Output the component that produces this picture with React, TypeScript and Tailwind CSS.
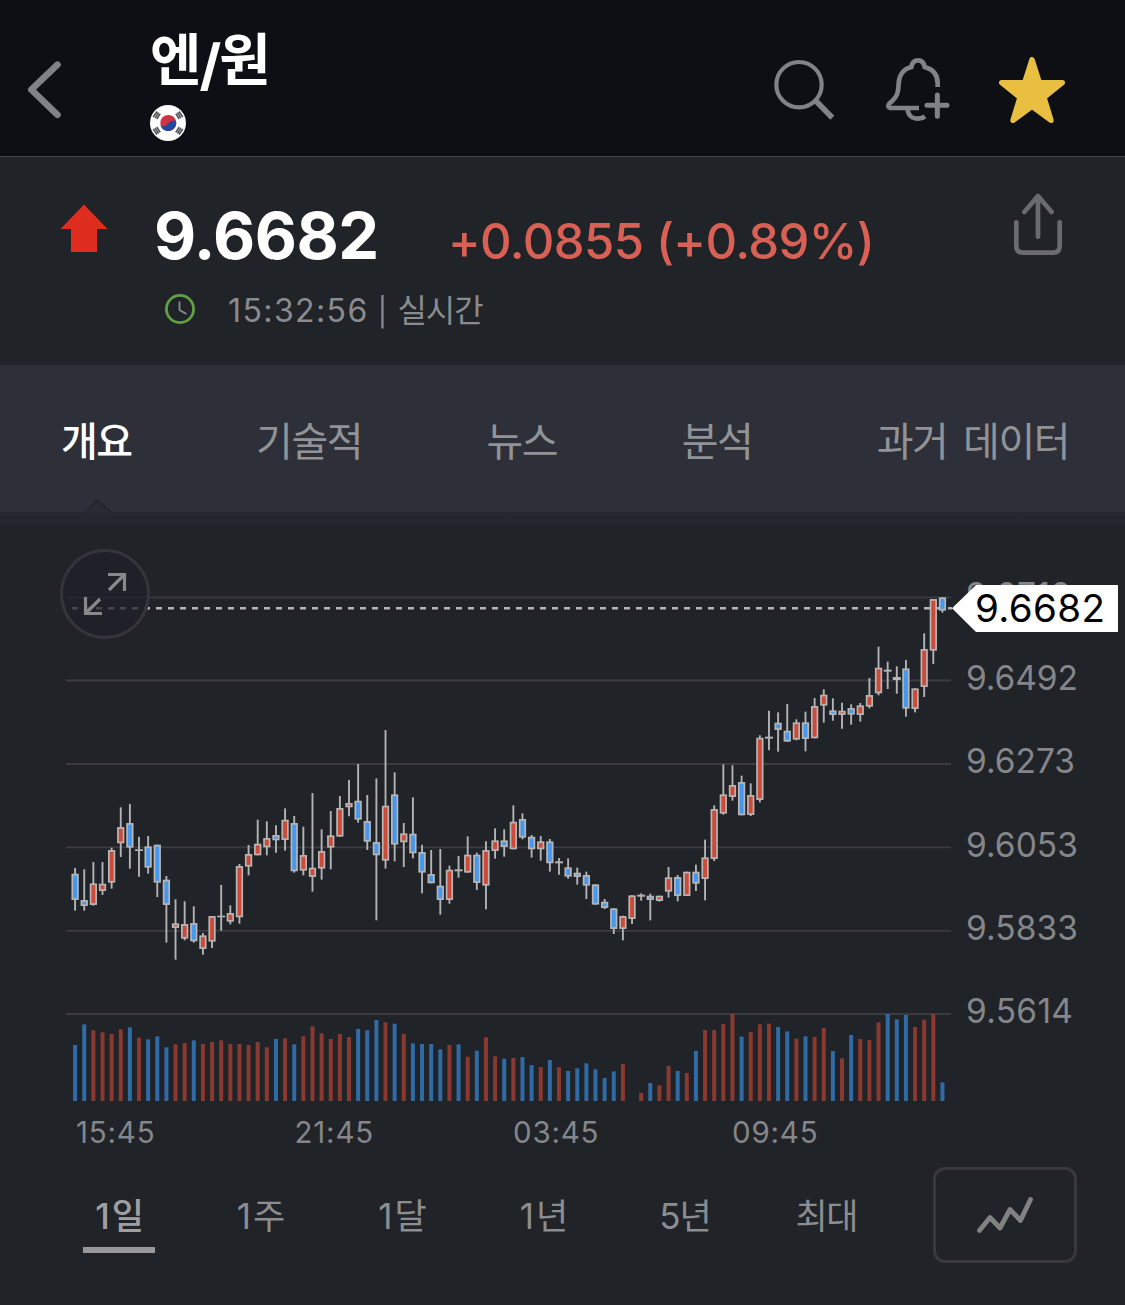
import React from "react";

const FONT = "font-['Inter','Noto_Sans_CJK_KR',sans-serif]";

type Kind = "r" | "b" | "d";
type Candle = [Kind, number, number, number, number];

// [kind, high, body top, body bottom, low] in thirds of a pixel, grouped by vertical origin
const EARLY: Candle[] = [
  ["b", 444, 461, 540, 572], ["b", 448, 540, 558, 572], ["r", 426, 490, 555, 557], ["r", 426, 491, 513, 525],
  ["r", 383, 390, 488, 506], ["r", 262, 321, 370, 411], ["b", 252, 309, 383, 446], ["d", 350, 388, 393, 470],
  ["b", 348, 379, 443, 461], ["b", 374, 374, 488, 531], ["b", 468, 479, 555, 668], ["r", 538, 610, 624, 719],
  ["r", 544, 612, 656, 661], ["b", 559, 609, 664, 668], ["r", 639, 646, 687, 704], ["r", 588, 588, 665, 684],
  ["d", 495, 587, 592, 632], ["r", 556, 579, 605, 613], ["r", 432, 438, 592, 611], ["r", 375, 402, 440, 466],
  ["r", 299, 371, 406, 406], ["r", 304, 354, 382, 406], ["b", 316, 345, 361, 398], ["r", 265, 299, 360, 392],
  ["b", 288, 309, 454, 458], ["r", 320, 405, 452, 466], ["r", 219, 443, 471, 515], ["r", 328, 393, 446, 479],
  ["r", 273, 346, 383, 448], ["r", 228, 264, 350, 350], ["r", 180, 249, 262, 289], ["b", 132, 242, 299, 308],
  ["b", 225, 303, 365, 390], ["b", 175, 366, 406, 601], ["r", 30, 257, 422, 446], ["b", 157, 223, 374, 424],
  ["r", 309, 340, 367, 441], ["b", 232, 341, 400, 415], ["b", 374, 396, 458, 520], ["b", 390, 462, 490, 490],
  ["b", 387, 497, 540, 584], ["r", 437, 449, 540, 551], ["d", 408, 448, 454, 473], ["r", 349, 404, 458, 458],
  ["b", 398, 404, 489, 510], ["r", 364, 390, 497, 568], ["r", 325, 361, 393, 416], ["b", 328, 361, 381, 410],
  ["r", 256, 305, 388, 388], ["b", 280, 297, 353, 358], ["b", 345, 350, 388, 413], ["r", 348, 364, 388, 422],
  ["b", 357, 364, 430, 455], ["d", 414, 424, 430, 464], ["b", 415, 442, 470, 476], ["b", 443, 458, 471, 494],
  ["b", 455, 465, 497, 537], ["b", 493, 493, 554, 554], ["b", 537, 545, 564, 567], ["b", 565, 565, 627, 642],
  ["r", 587, 588, 627, 661], ["r", 526, 526, 597, 612], ["d", 520, 524, 530, 542], ["b", 521, 527, 540, 601],
  ["r", 527, 527, 543, 545], ["r", 441, 472, 515, 533], ["b", 465, 471, 528, 544], ["r", 455, 455, 528, 528],
  ["b", 434, 455, 491, 513], ["r", 359, 412, 477, 541], ["r", 256, 267, 417, 423], ["r", 133, 223, 281, 284],
  ["r", 136, 195, 231, 242],
];
const LATE: Candle[] = [
  ["b", 617, 636, 736, 736], ["r", 640, 675, 735, 738], ["r", 496, 503, 690, 697], ["d", 422, 500, 506, 541],
  ["b", 427, 458, 480, 545], ["b", 402, 482, 515, 515], ["r", 448, 457, 509, 511], ["b", 425, 457, 507, 544],
  ["r", 384, 408, 505, 505], ["r", 358, 374, 407, 458], ["b", 385, 421, 435, 452], ["r", 398, 422, 435, 476],
  ["b", 403, 414, 434, 464], ["r", 399, 406, 435, 455], ["r", 324, 375, 410, 415], ["r", 230, 293, 370, 376],
  ["d", 275, 299, 305, 357], ["d", 289, 321, 330, 371], ["b", 270, 295, 416, 440], ["r", 355, 355, 417, 427],
  ["r", 190, 237, 351, 381], ["r", 87, 87, 242, 282], ["b", 82, 82, 122, 128],
];

const scale = (origin: number) => (c: Candle): Candle => [
  c[0], origin + c[1] / 3, origin + c[2] / 3, origin + c[3] / 3, origin + c[4] / 3,
];
const CANDLES: Candle[] = [...EARLY.map(scale(720)), ...LATE.map(scale(570))];

const VOLUMES =
  "b135 b73 r91 r97 r102 r88 b82 r113 b118 b109 b142 r133 r129 b121 r132 r126 r121 r132 r132 r135 r126 r142 b117 r115 b133 r109 r79 r100 r117 r102 r111 b87 b91 b60 r67 b71 r102 b130 b132 b132 b148 r135 b133 r170 b152 r112 r169 b176 r174 b171 b195 r201 b180 r202 b213 b205 b190 b208 b234 b214 r192 r303 r279 b249 r256 r198 b213 r219 b153 r90 r90 r72 r42 b110 r96 r73 r71 b81 b94 r116 b109 r111 r84 b153 r175 b105 r117 r120 r67 b42 b58 b45 r81 r59 r42 b247"
    .split(" ")
    .map((v) => ({ up: v[0] === "r", top: 1000 + Number(v.slice(1)) / 3 }));

const xAt = (i: number) => 75.1 + i * 9.13;

const GRID = [597.3, 680.5, 764, 847.3, 930.8, 1014];
const PRICES: [string, number][] = [
  ["9.6712", 105], ["9.6492", 112], ["9.6273", 109], ["9.6053", 112], ["9.5833", 112], ["9.5614", 107],
];
const TIMES: [string, number][] = [["15:45", 76], ["21:45", 294.5], ["03:45", 513], ["09:45", 732]];

function Header() {
  return (
    <header className="flex h-[157px] items-start border-b border-[#46464a] bg-[#0e0f14]">
      <svg className="ml-[24px] mt-[58px] h-[64px] w-[42px] shrink-0" viewBox="24 58 42 64" fill="none">
        <path d="M57.5 64.7 31.3 89.7 57.5 114.8" stroke="#808287" strokeWidth="6.6" strokeLinecap="round" strokeLinejoin="round" />
      </svg>
      <div className="ml-[84px] flex-1">
        <h1 className="mt-[27px] h-[71px] whitespace-nowrap text-[56px] font-bold leading-[66px] tracking-[-2px] text-white">
          엔<span className="align-[-5px] leading-none">/</span>원
        </h1>
        <svg className="mt-[7px] size-9" viewBox="0 0 36 36">
          <circle cx="18" cy="18" r="18" fill="#fff" />
          <circle cx="18.3" cy="18" r="8" fill="#cb3445" />
          <path d="M10.5 20.2C12.6 22.3 15.8 21.5 18.3 18.4 20.5 15.4 24 14.8 26 16.3 27 21 24 26 18.3 26 14.5 26 11.3 23.6 10.5 20.2Z" fill="#25479d" />
          <g stroke="#4c4d50" strokeWidth="1.5">
            <path d="M3.2 12 7 6.5M5 13.2 8.6 7.5M6.8 14 10.2 8.6" />
            <path d="M32.8 12 29 6.5M31 13.2 27.4 7.5M29.2 14 25.8 8.6" />
            <path d="M3.2 24 7 29.5M5 22.8 8.6 28.5M6.8 22 10.2 27.4" />
            <path d="M32.8 24 29 29.5M31 22.8 27.4 28.5M29.2 22 25.8 27.4" />
          </g>
        </svg>
      </div>
      <div className="mr-[60px] mt-[57px] flex gap-12">
        <svg className="size-[66px]" viewBox="92 81 198 198" fill="none" stroke="#808287">
          <circle cx="176" cy="164" r="68" strokeWidth="12.5" />
          <path d="M224 210 276 263" strokeWidth="17" />
        </svg>
        <svg className="size-[66px]" viewBox="434 81 198 198" fill="none" stroke="#808287" strokeWidth="14">
          <path d="M592 171V160C592 136 580 118 553 111 551 98 544 91 533 91 522 91 515 98 513 111 488 117 476 137 475 160 474 192 469 201 448 220 441 228 444 234 453 234H536" />
          <path d="M502 238C503 255 515 266 533 266 541 266 548 264 554 259" />
          <path d="M591 195V259M560 226H620" strokeWidth="15" strokeLinecap="round" />
        </svg>
        <svg className="size-[66px]" viewBox="777 81 198 198">
          <path d="M876 89 898 158H967L912 202 933 271 876 229 819 271 840 202 785 158H854Z" fill="#e9bf42" stroke="#e9bf42" strokeWidth="16" strokeLinejoin="round" />
        </svg>
      </div>
    </header>
  );
}

function Quote() {
  return (
    <section className="flex h-[208px] items-start">
      <svg className="ml-[60px] mt-[47px] h-[49px] w-[48px] shrink-0" viewBox="0 0 48 49">
        <path d="M24 0.5 47.5 25H37V48H11V25H0.5Z" fill="#df2d1f" />
      </svg>
      <div className="ml-[46px] flex-1">
        <div className="mt-[39px] flex h-[80px] items-baseline whitespace-nowrap leading-[80px]">
          <span className="w-[294px] text-[65px] font-bold tracking-[-0.5px] text-white">9.6682</span>
          <span className="text-[49px] font-medium tracking-[-0.6px] text-[#d96055]">+0.0855 (+0.89%)</span>
        </div>
        <div className="mt-[14px] flex items-start">
          <svg className="ml-[11px] mt-[4px] size-[30px]" viewBox="0 0 30 30" fill="none">
            <circle cx="15" cy="15" r="13.6" stroke="#62a045" strokeWidth="2.8" />
            <path d="M14.5 7.5V16L21.5 20" stroke="#8a8b90" strokeWidth="1.8" />
          </svg>
          <span className="ml-[33px] h-[42px] whitespace-nowrap text-[32px] leading-[42px] tracking-[1.4px] text-[#8a8b8f]">
            15:32:56<span className="mx-[9px] text-[28px]">|</span><span className="tracking-[-1px]">실시간</span>
          </span>
        </div>
      </div>
      <svg className="mr-[62px] mt-[35px] h-[66px] w-[50px]" viewBox="819 486 150 198" fill="none" stroke="#696b70" strokeWidth="14" strokeLinecap="round" strokeLinejoin="round">
        <path d="M894 620V500M853 546 894 498 935 546" />
        <path d="M829 577V648Q829 668 849 668H939Q959 668 959 648V577" />
      </svg>
    </section>
  );
}

function Tabs() {
  const tabs = ["개요", "기술적", "뉴스", "분석", "과거 데이터"];
  return (
    <nav className="relative flex h-[148px] items-center justify-between border-b border-[#25272c] bg-[#2d3038] pl-[61px] pr-[56px] pt-[6px]">
      {tabs.map((t, i) => (
        <span
          key={t}
          className={
            i === 0
              ? "whitespace-nowrap text-[40px] font-medium leading-[60px] tracking-[-1.5px] text-white"
              : "whitespace-nowrap text-[40px] leading-[60px] tracking-[-1.5px] [word-spacing:6px] text-[#929397]"
          }
        >
          {t}
        </span>
      ))}
      <svg className="absolute -bottom-[2px] left-[84px] h-[15px] w-[28px]" viewBox="0 0 28 15">
        <path d="M0 14 14 1 28 14" fill="#292b33" stroke="#22242a" strokeWidth="1.5" />
      </svg>
    </nav>
  );
}

function Chart() {
  return (
    <section className="relative h-[637px]">
      <div className="h-[11px] bg-gradient-to-b from-[#272932] to-[#23252c]" />
      <svg className="block h-[626px] w-[1125px]" viewBox="0 524 1125 626" fontFamily="Inter, sans-serif">
        {GRID.map((y) => (
          <line key={y} x1="66" x2="951" y1={y} y2={y} stroke="#3b3c40" strokeWidth="1.8" />
        ))}
        {PRICES.map(([p, w], i) => (
          <text key={p} x="966" y={GRID[i] + 9.2} fontSize="33.5" textLength={w} fill="#85868a">{p}</text>
        ))}
        {VOLUMES.map((v, i) => (
          <rect key={i} x={xAt(i) - 2} width="4" y={v.top} height={1101 - v.top} fill={v.up ? "#89392f" : "#316ba5"} />
        ))}
        <line x1="72" x2="952" y1="608.3" y2="608.3" stroke="#b5b6b8" strokeWidth="2.6" strokeDasharray="6 6" />
        {CANDLES.map(([k, hi, top, bot, lo], i) => {
          const x = xAt(i);
          return (
            <g key={i}>
              <line x1={x} x2={x} y1={hi} y2={lo} stroke="#b2b3b4" strokeWidth="1.9" />
              {k === "d" ? (
                <rect x={x - 4} width="8" y={top} height={bot - top} fill="#b2b3b4" />
              ) : (
                <rect x={x - 2.8} width="5.6" y={top + 0.9} height={Math.max(bot - top - 1.8, 0.5)} fill={k === "r" ? "#ce4a38" : "#4598ef"} stroke="#b8b5b5" strokeWidth="1.7" />
              )}
            </g>
          );
        })}
        <path d="M952 608.3 976 585H1118V632H976Z" fill="#fff" />
        <text x="975" y="622" fontSize="38.5" textLength="130" fill="#000">9.6682</text>
        {TIMES.map(([t, x]) => (
          <text key={t} x={x} y="1142.5" fontSize="29.5" letterSpacing="0.8" fill="#85868a">{t}</text>
        ))}
      </svg>
      <button className="absolute left-[60px] top-[36px] size-[90px] rounded-full border-[3px] border-[#33353a] bg-[#1f212b]/75">
        <svg className="size-[84px]" viewBox="63 552 84 84" fill="none" stroke="#87888a" strokeWidth="3.2">
          <path d="M108 574.5H124.5V591M124 575 109 590" />
          <path d="M85.5 597V613.5H102M86 613 100 599" />
        </svg>
      </button>
    </section>
  );
}

function Ranges() {
  const ranges = [["1", "일"], ["1", "주"], ["1", "달"], ["1", "년"], ["5", "년"], ["", "최대"]];
  return (
    <section className="flex h-[155px] items-start">
      <div className="ml-[48px] mt-[39px] grid w-[849px] grid-cols-6">
        {ranges.map(([n, unit], i) => (
          <div key={n + unit} className="flex flex-col items-center">
            <span className={i === 0 ? "h-[58px] text-[35px] font-medium leading-[54px] tracking-[-1.5px] text-[#a0a0a3]" : "h-[58px] text-[35px] leading-[54px] tracking-[-1.5px] text-[#8c8d90]"}>
              {n && <span className={n === "1" ? "tracking-[2px]" : "tracking-[-1px]"}>{n}</span>}
              {unit}
            </span>
            {i === 0 && <span className="h-[6px] w-[72px] bg-[#98989b]" />}
          </div>
        ))}
      </div>
      <button className="ml-[36px] mt-[17px] flex h-[96px] w-[144px] items-center justify-center rounded-[12px] border-[3px] border-[#37393d]">
        <svg className="h-[90px] w-[138px]" viewBox="936 1170 138 90" fill="none" stroke="#828283" strokeWidth="4.8" strokeLinecap="round" strokeLinejoin="round">
          <path d="M979.5 1230.5 990 1217.5 1000 1228 1010 1209.5 1020.5 1220.5 1030.5 1199.5" />
        </svg>
      </button>
    </section>
  );
}

export default function App() {
  return (
    <main className={`${FONT} h-[1305px] w-[1125px] overflow-hidden bg-[#202327]`}>
      <Header />
      <Quote />
      <Tabs />
      <Chart />
      <Ranges />
    </main>
  );
}
